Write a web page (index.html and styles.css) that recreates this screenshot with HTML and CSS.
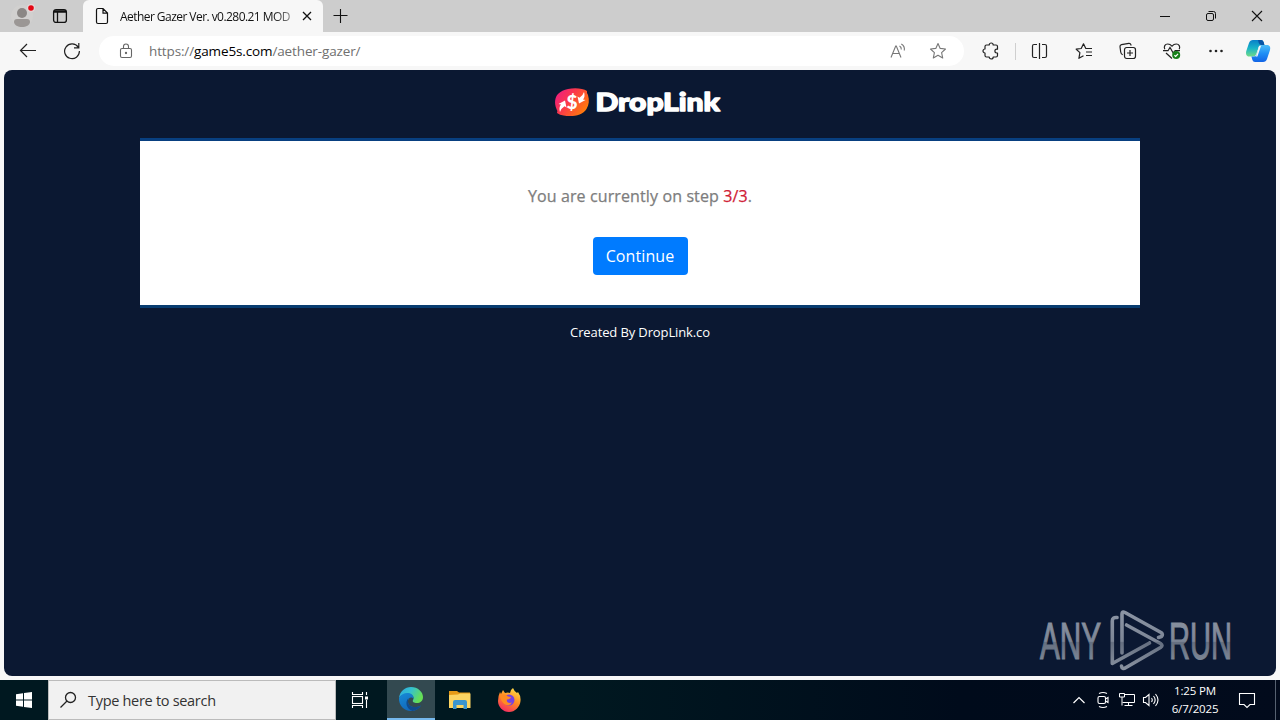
FILE: index.html
```html
<!DOCTYPE html>
<html lang="en">
<head>
    <meta charset="UTF-8">
    <meta name="viewport" content="width=device-width, initial-scale=1.0">
    <title>Aether Gazer Ver. v0.280.21 MOD</title>
    <link rel="stylesheet" href="styles.css">
</head>
<body>
    <!-- Tab strip -->
    <div class="tabs">
        <div class="profile">
            <svg width="26" height="28" viewBox="0 0 26 28">
                <circle cx="12" cy="14" r="11" fill="#d1d0cf"/>
                <circle cx="12" cy="11" r="5" fill="#8b8785"/>
                <path d="M4 20q0-3 3-3h10q3 0 3 3c0 3-4 5-8 5s-8-2-8-5z" fill="#9b9795"/>
                <circle cx="21" cy="6" r="4" fill="#e4d6d6"/>
                <circle cx="21" cy="6" r="2.8" fill="#e30613"/>
            </svg>
        </div>
        <div class="tab-menu">
            <svg width="16" height="16" viewBox="0 0 16 16" fill="none" stroke="#111" stroke-width="1.3">
                <rect x="1.6" y="1.6" width="12.8" height="12.8" rx="2.5"/>
                <path d="M2 3.500h12" stroke-width="2.500"/>
                <path d="M5.500 4v10"/>
            </svg>
        </div>
        <div class="tab">
            <svg class="tab-icon" width="14" height="18" viewBox="0 0 14 18" fill="none" stroke="#111" stroke-width="1.2">
                <path d="M3 1.500h5l4.500 4.600V15q0 1.500-1.500 1.500H3Q1.500 16.500 1.500 15V3Q1.500 1.500 3 1.500zM8 1.500v4.600h4.500"/>
            </svg>
            <span class="tab-title">Aether Gazer Ver. v0.280.21 MOD</span>
            <svg class="tab-close" width="10" height="10" viewBox="0 0 10 10" stroke="#111" stroke-width="1.3">
                <path d="M1 1l8 8M9 1l-8 8"/>
            </svg>
        </div>
        <div class="new-tab">
            <svg width="16" height="16" viewBox="0 0 16 16" stroke="#111" stroke-width="1.1">
                <path d="M7.500 1v14M.5 7.500h14"/>
            </svg>
        </div>
        <div class="window-buttons">
            <span><svg width="12" height="12" viewBox="0 0 12 12" stroke="#111"><path d="M1 6.500h10"/></svg></span>
            <span><svg width="12" height="12" viewBox="0 0 12 12" fill="none" stroke="#111"><rect x="1.500" y="3.500" width="7" height="7" rx="1.500"/><path d="M3.500 1.500H8.500q2 0 2 2V8.500"/></svg></span>
            <span><svg width="12" height="12" viewBox="0 0 12 12" stroke="#111" stroke-width="1.1"><path d="M1 1l10 10M11 1L1 11"/></svg></span>
        </div>
    </div>

    <!-- Toolbar -->
    <div class="toolbar">
        <span class="nav back"><svg width="18" height="16" viewBox="0 0 18 16" fill="none" stroke="#222" stroke-width="1.2"><path d="M17 7.500H1.500M8 1L1.500 7.500 8 14"/></svg></span>
        <span class="nav"><svg width="18" height="18" viewBox="0 0 18 18" fill="none" stroke="#222" stroke-width="1.2"><path d="M15.200 5.200A7.400 7.400 0 1 0 16.400 9M15.800 1v4.800H11"/></svg></span>
        <div class="address">
            <svg class="lock" width="14" height="16" viewBox="0 0 14 16" fill="none" stroke="#666" stroke-width="1.1"><rect x="1.500" y="5.500" width="11" height="9" rx="1.500"/><path d="M4.500 5.500V3.500a2.500 2.500 0 0 1 5 0v2"/><circle cx="7" cy="10" r=".6" fill="#666"/></svg>
            <span class="url">https://<b>game5s.com</b>/aether-gazer/</span>
            <span class="address-icon">
                <svg width="18" height="18" viewBox="0 0 18 18" fill="none" stroke="#777" stroke-width="1.1"><path d="M2 15.500L6.700 4h.6L12 15.500M3.700 11.500h6.600M10.500 4q2 1 1.800 3.500M12.300 2q3.700 2 3 6.500"/></svg>
            </span>
            <span class="address-icon">
                <svg width="18" height="18" viewBox="0 0 18 18" fill="none" stroke="#777" stroke-width="1.1" stroke-linejoin="round"><path d="M9 1.500l2.200 4.900 5.300.6-3.900 3.600 1.100 5.400L9 13.300 4.300 16l1.100-5.400L1.500 7l5.300-.6z"/></svg>
            </span>
        </div>
        <!-- Extensions -->
        <span class="tool"><svg width="18" height="18" viewBox="0 0 18 18" fill="none" stroke="#222" stroke-width="1.2" stroke-linejoin="round"><path d="M4.500 3h2.700a2 2 0 0 1 4 0H14q1.500 0 1.500 1.500v2.700h-.7a1.900 1.900 0 0 0 0 3.800h.7v2.500q0 1.500-1.500 1.500h-2.800a2 2 0 0 1-4 0H4.500Q3 15 3 13.500V11a2 2 0 0 1 0-4V4.500Q3 3 4.500 3z"/></svg></span>
        <span class="separator"></span>
        <!-- Split screen -->
        <span class="tool"><svg width="18" height="18" viewBox="0 0 18 18" fill="none" stroke="#222" stroke-width="1.2"><path d="M8.500 1v16M6 2.500H3Q1.500 2.500 1.500 4v10q0 1.500 1.500 1.500h3M11 2.500H14q1.500 0 1.500 1.500v10q0 1.500-1.500 1.500h-3"/></svg></span>
        <!-- Favorites -->
        <span class="tool"><svg width="18" height="18" viewBox="0 0 18 18" fill="none" stroke="#222" stroke-width="1.2" stroke-linejoin="round"><path d="M17 6.500h-6.200L8.500 1.800 6.200 6.500l-5 .7 3.700 3.400-1 5.700 4.600-2.600M11 10h6M11 13.500h6"/></svg></span>
        <!-- Collections -->
        <span class="tool"><svg width="18" height="18" viewBox="0 0 18 18" fill="none" stroke="#222" stroke-width="1.2"><rect x="5.500" y="5.500" width="11" height="11" rx="2.200"/><path d="M11 8v6M8 11h6M3.700 12.800Q2 12 1.700 10L1 4.800Q.8 3 2.500 2.600l7.300-1.300q1.700-.2 2.200 1.500l.2.700"/></svg></span>
        <!-- Browser essentials -->
        <span class="tool"><svg width="20" height="18" viewBox="0 0 20 18" fill="none" stroke="#222" stroke-width="1.2"><path d="M2.800 7.200C1.500 4.500 3 2 5.700 2 8 2 9 3 10 4.200 11 3 12 2 14.300 2c2.700 0 4.200 2.500 2.900 5.200M1 8.700h5l2-3.200 3.200 5.500 2-2.300H18M4 11l6 5.500"/><circle cx="14.200" cy="13" r="4" fill="#16801a" stroke="none"/><path d="M12.400 13.200l1.300 1.200 2.300-2.500" stroke="#fff"/></svg></span>
        <span class="tool"><svg width="18" height="18" viewBox="0 0 18 18" fill="#222"><circle cx="3.500" cy="9" r="1.300"/><circle cx="9" cy="9" r="1.300"/><circle cx="14.500" cy="9" r="1.300"/></svg></span>
        <span class="tool copilot">
            <svg width="26" height="24" viewBox="0 0 26 24">
                <defs>
                    <linearGradient id="cp-left" x1="0" y1="0" x2="0" y2="1"><stop offset="0" stop-color="#087fc8"/><stop offset=".5" stop-color="#18b4c8"/><stop offset="1" stop-color="#71db87"/></linearGradient>
                    <linearGradient id="cp-right" x1="0" y1="0" x2="0" y2="1"><stop offset="0" stop-color="#4bbdf8"/><stop offset=".5" stop-color="#1f8ff5"/><stop offset="1" stop-color="#1264e6"/></linearGradient>
                </defs>
                <path d="M8 1h8q2 0 2.600 2l.8 3h-3q-2 0-2.700 2l-2.400 7q-.8 2.500-3.300 2.500H4C1.500 17.500.5 15 1.300 12L4 4Q5 1 8 1z" fill="url(#cp-left)"/>
                <path d="M18 23h-8q-2 0-2.600-2l-1-3.500H9q2 0 2.700-2l2.500-7.500Q15 6 17 6h5c3 0 3.700 2.500 3 5l-3 9q-1 3-4 3z" fill="url(#cp-right)"/>
                <path d="M14 7h2l-3.600 10.500h-2.800q1.500 0 2-1.500z" fill="#f7f7f7"/>
                <path d="M13 1h3q2 0 2.600 2l.8 3h-3q-2 0-2.600-2z" fill="#0754a5"/>
            </svg>
        </span>
    </div>

    <!-- Page -->
    <main class="page">
        <svg class="logo" width="168" height="34" viewBox="0 0 168 34">
            <defs>
                <linearGradient id="drop" x1="0" y1="0" x2="1" y2=".6"><stop offset="0" stop-color="#ec168c"/><stop offset=".5" stop-color="#fb3a49"/><stop offset="1" stop-color="#ff7a0c"/></linearGradient>
            </defs>
            <path d="M14 3C20 1.500 29 2 33 5q-.5 2 1 4c1.500 5 1 10-1.500 14-4 7-15 8-23 6.500Q6 29 3 27q1-2-.5-4C0 17 1 11 4 8q4-4 10-5z" fill="url(#drop)"/>
            <text class="dollar" x="18" y="23" text-anchor="middle">$</text>
            <path d="M6 26q-1.500-4.500 1-7.500L4.500 18l6.500-3.500 1.500 7-2-1.200Q7 22.500 6 26zM30 6q1.500 4.500-1 7.500l2.500.500L25 17.500l-1.500-7 2 1.200Q29 9.500 30 6z" fill="#fff"/>
            <text class="brand" x="41.500" y="24.500" textLength="124.500" lengthAdjust="spacingAndGlyphs">DropLink</text>
        </svg>
        <section class="box">
            <p class="step">You are currently on step <span class="count">3/3</span>.</p>
            <button class="btn">Continue</button>
        </section>
        <footer class="credit">Created By DropLink.co</footer>

        <svg class="watermark" width="200" height="64" viewBox="0 0 200 64">
            <defs>
                <linearGradient id="wm" gradientUnits="userSpaceOnUse" x1="0" y1="0" x2="0" y2="64"><stop offset="0" stop-color="#8d96a5"/><stop offset=".52" stop-color="#7d8696"/><stop offset=".54" stop-color="#656f80"/><stop offset="1" stop-color="#8d96a4"/></linearGradient>
            </defs>
            <text x="2" y="51" textLength="61" lengthAdjust="spacingAndGlyphs">ANY</text>
            <text x="131" y="51" textLength="63" lengthAdjust="spacingAndGlyphs">RUN</text>
            <g fill="none" stroke="url(#wm)" stroke-width="3.6" stroke-linejoin="round" stroke-linecap="round">
                <path d="M79 9.500q-4.700-.5-4.700 3.500v42.500L111.500 35"/>
                <path d="M84 45V6q0-3 3-1.500l36 20q2.500 2 .5 4l-3 1"/>
                <path d="M88.500 17l34 18.500q3 2 0 4L88 59.500q-4 2.500-4.500-1.500"/>
            </g>
        </svg>
    </main>

    <!-- Taskbar -->
    <div class="taskbar">
        <span class="start"><svg width="16" height="16" viewBox="0 0 16 16" fill="#fff"><path d="M0 2.300l7-1v6.200H0zM8 1.100L16 0v7.500H8zM0 8.500h7v6.200l-7-1zM8 8.500h8V16l-8-1.100z"/></svg></span>
        <div class="search">
            <svg width="18" height="18" viewBox="0 0 18 18" fill="none" stroke="#222" stroke-width="1.3"><circle cx="10.500" cy="6.500" r="5"/><path d="M7 10L.5 16.500"/></svg>
            <span>Type here to search</span>
        </div>
        <span class="app task-view"><svg width="18" height="18" viewBox="0 0 18 18" fill="none" stroke="#fff" stroke-width="1.1"><path d="M1.500 1v2.500h10V1M1.500 17v-2.500h10V17M15.500 1v3M15.500 9v8"/><rect x="1.500" y="5.500" width="10" height="7"/><path d="M14 5.500h3v3h-3z" fill="#fff" stroke="none"/></svg></span>
        <span class="app active">
            <svg width="26" height="26" viewBox="0 0 26 26">
                <defs>
                    <linearGradient id="edge-top" x1="0" y1="0" x2="1" y2=".4"><stop offset="0" stop-color="#2ba8e0"/><stop offset=".5" stop-color="#35c1cf"/><stop offset="1" stop-color="#66df55"/></linearGradient>
                    <linearGradient id="edge-low" x1="0" y1="0" x2=".6" y2="1"><stop offset="0" stop-color="#168bd8"/><stop offset="1" stop-color="#1264b5"/></linearGradient>
                </defs>
                <path d="M1 12C2 5 7 1 13 1c7 0 12 5 12 10 0 4-3 6-6 6-3 0-5-1-4-3 2-3-1-6-5-6-4 0-7 1-9 4z" fill="url(#edge-top)"/>
                <path d="M1 12c2-4 6-5.500 9.500-5C14 7.500 16 10 15.500 13c-2-3-6-1-5.500 3 .5 5 7 6.500 13 3.500C21 23 17.500 25 13 25 6 25 .5 19 1 12z" fill="url(#edge-low)"/>
                <path d="M10.500 12c-4 4-2 11 4 13 3.500-.5 6.500-2.500 8.500-5.500-6 3-12.500 1.500-13-3.500-.1-1.500.1-3 .5-4z" fill="#114a8b"/>
            </svg>
        </span>
        <span class="app">
            <svg width="24" height="22" viewBox="0 0 24 22">
                <path d="M1 2h8l2 1.500h11V8H1z" fill="#e69a16"/>
                <path d="M1 6l9-.5 2-1h10.500V19H1z" fill="#fcd462"/>
                <path d="M5 20v-7q0-2 2-2h10q2 0 2 2v7h-3.500v-4h-7v4z" fill="#3b95d0"/>
            </svg>
        </span>
        <span class="app">
            <svg width="26" height="26" viewBox="0 0 26 26">
                <defs>
                    <linearGradient id="fox" x1=".8" y1="0" x2=".3" y2="1"><stop offset="0" stop-color="#ffe14a"/><stop offset=".5" stop-color="#ff8a23"/><stop offset="1" stop-color="#f52b63"/></linearGradient>
                </defs>
                <path d="M4 5l1 2 2-4 2 3q3-1 5 0 0-3 3-5 1 3 4 5l1-1q3 4 2.500 9C24 20 19 25 13 25S2 20 2 14q0-5 2-9z" fill="url(#fox)"/>
                <circle cx="13" cy="13" r="5.500" fill="#7542e5"/>
                <path d="M4 9q5-3 8 .5l3 .5q0 2-4 2.500c-1 3 2 4 5 3q-2 4-7 2Q5 15 4 9z" fill="#ff8c22"/>
            </svg>
        </span>
        <div class="tray">
            <span class="tray-icon"><svg width="14" height="18" viewBox="0 0 14 18" fill="none" stroke="#fff" stroke-width="1.2"><path d="M1.500 12L7 6.500l5.500 5.500"/></svg></span>
            <span class="tray-icon"><svg width="14" height="18" viewBox="0 0 14 18" fill="none" stroke="#fff" stroke-width="1.1"><rect x="2" y="5.500" width="7.500" height="7" rx="1.500"/><path d="M9.500 8l2.500-1.500v5L9.500 10M3 2.500q4-2 8 0M3 15.500q4 2 8 0"/></svg></span>
            <span class="tray-icon"><svg width="18" height="18" viewBox="0 0 18 18" fill="none" stroke="#fff"><path d="M6.500 3.500h10v8h-12M10.500 11.500v3M6.500 14.500h8M1.500 2.500h5v3.500h-5zM4 6v8.500"/></svg></span>
            <span class="tray-icon"><svg width="18" height="18" viewBox="0 0 18 18" fill="none" stroke="#fff" stroke-width="1.1"><path d="M1.500 6.500h2L7 3.500v11l-3.500-3h-2zM9.500 7q1.500 2 0 4M11.500 5q3.300 4 0 8M13.500 3q5 6 0 12"/></svg></span>
            <div class="clock"><span>1:25 PM</span><span>6/7/2025</span></div>
            <span class="notifications"><svg width="18" height="18" viewBox="0 0 18 18" fill="none" stroke="#fff" stroke-width="1.1"><path d="M1.500 2.500h15v11H12l-3 3-3-3H1.500z"/></svg></span>
            <span class="show-desktop"></span>
        </div>
    </div>
</body>
</html>
```
FILE: styles.css
```css
* {
    box-sizing: border-box;
}
body {
    display: flex;
    flex-direction: column;
    width: 1280px;
    height: 720px;
    margin: 0;
    overflow: hidden;
    background: #f7f7f7;
    font-family: "Open Sans", "Noto Sans", sans-serif;
}
svg {
    display: block;
    flex: none;
}

/* Tab strip */
.tabs {
    display: flex;
    height: 32px;
    background: #cdcdcd;
}
.profile, .tab-menu, .new-tab, .nav, .tool, .address-icon, .window-buttons span {
    display: flex;
    align-items: center;
    justify-content: center;
}
.profile {
    width: 46px;
}
.tab-menu {
    width: 28px;
    margin-right: 9px;
}
.tab {
    display: flex;
    align-items: center;
    width: 240px;
    padding: 0 11px 0 12px;
    background: #f7f7f7;
    border-radius: 6px 6px 0 0;
}
.tab-title {
    width: 173px;
    margin-left: 11px;
    overflow: hidden;
    white-space: nowrap;
    font-size: 12px;
    letter-spacing: -0.55px;
    color: #111;
    -webkit-mask-image: linear-gradient(to right, #000 88%, rgba(0, 0, 0, 0.4));
}
.tab-close {
    margin-left: auto;
}
.new-tab {
    width: 35px;
}
.window-buttons {
    display: flex;
    margin-left: auto;
}
.window-buttons span {
    width: 46px;
}

/* Toolbar */
.toolbar {
    display: flex;
    align-items: center;
    height: 38px;
}
.nav {
    width: 44px;
}
.back {
    margin-left: 6px;
}
.address {
    display: flex;
    align-items: center;
    width: 865px;
    height: 30px;
    margin: 0 5px;
    padding: 0 6px 0 20px;
    background: #fff;
    border-radius: 15px;
}
.url {
    margin: 0 auto 0 16px;
    font-size: 13.5px;
    letter-spacing: -0.13px;
    color: #707070;
}
.url b {
    font-weight: normal;
    color: #000;
}
.address-icon {
    width: 40px;
}
.tool {
    width: 44px;
}
.copilot {
    width: 40px;
}
.separator {
    width: 1px;
    height: 17px;
    margin: 0 2px;
    background: #cfcfcf;
}

/* Page */
.page {
    position: relative;
    display: flex;
    flex-direction: column;
    align-items: center;
    height: 606px;
    margin: 0 4px;
    padding-top: 16px;
    background: #0b1832;
    border-radius: 8px;
}
.logo {
    margin-right: 5px;
}
.dollar {
    font: 900 19px Lato, sans-serif;
    fill: #fff;
}
.brand {
    font: 900 24px Lato, sans-serif;
    fill: #fff;
    stroke: #fff;
    stroke-width: 1.3px;
    stroke-linejoin: round;
}
.box {
    display: flex;
    flex-direction: column;
    align-items: center;
    width: 1000px;
    height: 170px;
    margin-top: 18px;
    padding-top: 43px;
    background: #fff;
    border-top: 3px solid #083f80;
    border-bottom: 3px solid #083c70;
}
.step {
    margin: 0;
    font-size: 16px;
    line-height: 24px;
    letter-spacing: 0.12px;
    color: #7d7d7d;
    -webkit-text-stroke: 0.25px;
}
.count {
    color: #d02035;
}
.btn {
    width: 95px;
    height: 38px;
    margin-top: 29px;
    padding: 0;
    border: none;
    border-radius: 4px;
    background: #007bff;
    color: #fff;
    font-family: inherit;
    font-size: 16px;
    letter-spacing: 0.1px;
}
.credit {
    margin-top: 14px;
    font-size: 13px;
    line-height: 20px;
    letter-spacing: -0.12px;
    color: #fff;
}
.watermark {
    position: absolute;
    right: 38px;
    bottom: 4px;
}
.watermark text {
    font: 51px "Liberation Sans", sans-serif;
    fill: url(#wm);
    stroke: url(#wm);
    stroke-width: 1.2px;
}

/* Taskbar */
.taskbar {
    display: flex;
    height: 40px;
    margin-top: 4px;
    background: linear-gradient(to right, #001820 0%, #001820 45%, #000b1b 75%, #020b1c 100%);
    color: #fff;
}
.start, .app, .tray-icon, .notifications {
    display: flex;
    align-items: center;
    justify-content: center;
}
.start {
    width: 48px;
}
.search {
    display: flex;
    align-items: center;
    gap: 10px;
    width: 288px;
    padding-left: 11px;
    background: #f1f1f1;
    border: 1px solid #bbb;
    color: #333;
    font-size: 14.5px;
    letter-spacing: -0.3px;
}
.app {
    width: 48px;
    margin-right: 1px;
}
.task-view {
    margin-right: 3px;
}
.active {
    background: #334950;
    border-bottom: 2px solid #76b9ed;
}
.tray {
    display: flex;
    margin-left: auto;
}
.tray-icon {
    width: 24px;
}
.clock {
    display: flex;
    flex-direction: column;
    align-items: center;
    justify-content: center;
    width: 64px;
    font-size: 11.5px;
    line-height: 18px;
    letter-spacing: -0.15px;
}
.notifications {
    width: 40px;
}
.show-desktop {
    width: 5px;
    margin-left: 8px;
    border-left: 1px solid #566170;
}
```
